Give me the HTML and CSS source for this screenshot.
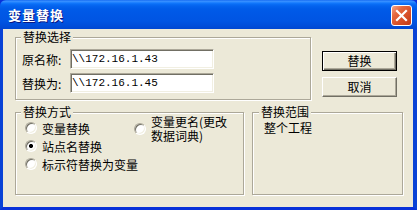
FILE: index.html
```html
<!DOCTYPE html>
<html lang="zh-CN">
<head>
<meta charset="utf-8">
<title>变量替换</title>
<link rel="stylesheet" href="styles.css">
</head>
<body>
<div class="window">
  <div class="titlebar">
    <span class="title">变量替换</span>
    <button class="close" aria-label="关闭">
      <svg width="19" height="19" viewBox="0 0 19 19"><path d="M5 5 L14 14 M14 5 L5 14" stroke="#fff" stroke-width="2.2" stroke-linecap="square" fill="none"/></svg>
    </button>
  </div>
  <div class="client">
    <div class="row top-row">
      <fieldset class="group g-select">
        <legend>替换选择</legend>
        <div class="fields">
          <div class="field"><label>原名称:</label><input class="edit" type="text" value="\\172.16.1.43" readonly></div>
          <div class="field"><label>替换为:</label><input class="edit" type="text" value="\\172.16.1.45" readonly></div>
        </div>
      </fieldset>
      <div class="buttons">
        <button class="btn default">替换</button>
        <button class="btn">取消</button>
      </div>
    </div>
    <div class="row bottom-row">
      <fieldset class="group g-mode">
        <legend>替换方式</legend>
        <div class="mode">
          <div class="col left-col">
            <label class="opt"><input class="radio" type="radio" name="m"><span>变量替换</span></label>
            <label class="opt"><input class="radio" type="radio" name="m" checked><span>站点名替换</span></label>
            <label class="opt"><input class="radio" type="radio" name="m"><span>标示符替换为变量</span></label>
          </div>
          <div class="col right-col">
            <label class="opt two-line"><input class="radio" type="radio" name="m"><span class="lines"><span class="ln">变量更名(更改</span><span class="ln">数据词典)</span></span></label>
          </div>
        </div>
      </fieldset>
      <fieldset class="group g-scope">
        <legend>替换范围</legend>
        <div class="scope">整个工程</div>
      </fieldset>
    </div>
  </div>
</div>
</body>
</html>
```

FILE: styles.css
```css
* { box-sizing: border-box; }
html, body { margin: 0; padding: 0; }
body {
  width: 417px;
  height: 210px;
  overflow: hidden;
  font-family: "Noto Sans CJK SC", "Liberation Sans", sans-serif;
  font-size: 12px;
  color: #000;
  background: #0831d9;
}
.window {
  width: 417px;
  height: 210px;
  display: flex;
  flex-direction: column;
}
.titlebar {
  height: 29px;
  flex: none;
  display: flex;
  align-items: flex-start;
  justify-content: space-between;
  padding: 0 5px 0 8px;
  border-radius: 6px 6px 0 0;
  background: linear-gradient(to bottom,
    #0a5fee 0px, #3d93ff 1px, #2b88ff 2px, #157bfd 3px, #0a6ef6 4px,
    #0463ee 6px, #005be8 9px, #0057e5 15px, #0055e3 21px, #004fdb 25px, #0047d2 29px);
}
.title {
  color: #fff;
  font-weight: bold;
  font-size: 13px;
  letter-spacing: 1px;
  line-height: 29px;
  text-shadow: 1px 1px 0 #0a1883;
}
.close {
  margin: 5px 0 0 0;
  width: 21px;
  height: 21px;
  padding: 0;
  border: 1px solid #fff;
  border-radius: 3px;
  background: linear-gradient(135deg, #f4a68c 0%, #e5693f 30%, #d8512a 60%, #c23a17 100%);
  display: flex;
  align-items: center;
  justify-content: center;
}
.close svg { display: block; }
.client {
  flex: 1;
  background: #ece9d8;
  border-left: 3px solid #0842d6;
  border-right: 4px solid #0842d6;
  border-bottom: 3px solid #0831d9;
  padding: 1px 0 0 12px;
}
.row { display: flex; align-items: flex-start; }
.top-row { gap: 11px; }
.bottom-row { gap: 8px; margin-top: 5px; }

.group {
  margin: 0;
  min-width: 0;
  border: 1px solid #aca899;
  box-shadow: inset 1px 1px 0 #fff, 1px 1px 0 #fff;
  padding: 0 5px;
}
.group legend {
  padding: 0 2px;
  line-height: 14px;
  background: #ece9d8;
}
.g-select { width: 296px; padding: 5px 5px 6px 5px; }
.g-mode { width: 229px; height: 90px; }
.g-scope { width: 151px; height: 90px; padding-left: 6px; }

.fields { display: flex; flex-direction: column; gap: 4px; margin-left: 1px; }
.field { display: flex; align-items: center; height: 20px; }
.field label { width: 48px; flex: none; }
.edit {
  width: 144px;
  height: 20px;
  margin: 0;
  padding: 0 1px;
  font-family: "Liberation Mono", "DejaVu Sans Mono", monospace;
  font-size: 11px;
  color: #000;
  background: #fff;
  border: 1px solid;
  border-color: #aca899 #fff #fff #aca899;
  box-shadow: inset 1px 1px 0 #716f64, inset -1px -1px 0 #f1efe2;
  outline: none;
}

.buttons { display: flex; flex-direction: column; gap: 6px; margin-top: 21px; }
.btn {
  width: 75px;
  height: 20px;
  margin: 0;
  padding: 0;
  font-family: inherit;
  font-size: 12px;
  line-height: 16px;
  color: #000;
  background: #ece9d8;
  border: 1px solid;
  border-color: #fff #716f64 #716f64 #fff;
  box-shadow: inset -1px -1px 0 #aca899;
}
.btn.default {
  border: 1px solid #000;
  box-shadow: inset 1px 1px 0 #fff, inset -1px -1px 0 #716f64, inset -2px -2px 0 #aca899;
}

.mode { display: flex; margin-left: 4px; }
.left-col { width: 109px; flex: none; display: flex; flex-direction: column; }
.opt { display: flex; align-items: center; gap: 5px; height: 18px; white-space: nowrap; }
.opt.two-line { height: auto; margin-top: -4px; }
.lines { display: flex; flex-direction: column; gap: 1px; }
.ln { display: block; height: 13px; line-height: 13px; }
.radio {
  appearance: none;
  -webkit-appearance: none;
  width: 12px;
  height: 12px;
  margin: 0;
  flex: none;
  border-radius: 50%;
  border: 1px solid;
  border-color: #aca899 #fff #fff #aca899;
  box-shadow: inset 1px 1px 0 #716f64, inset -1px -1px 0 #f1efe2;
  background: #fff;
}
.radio:checked {
  background: radial-gradient(circle at 50% 50%, #000 0, #000 1.8px, #fff 2.3px);
}
.scope { margin-left: 5px; height: 18px; line-height: 18px; }
```
